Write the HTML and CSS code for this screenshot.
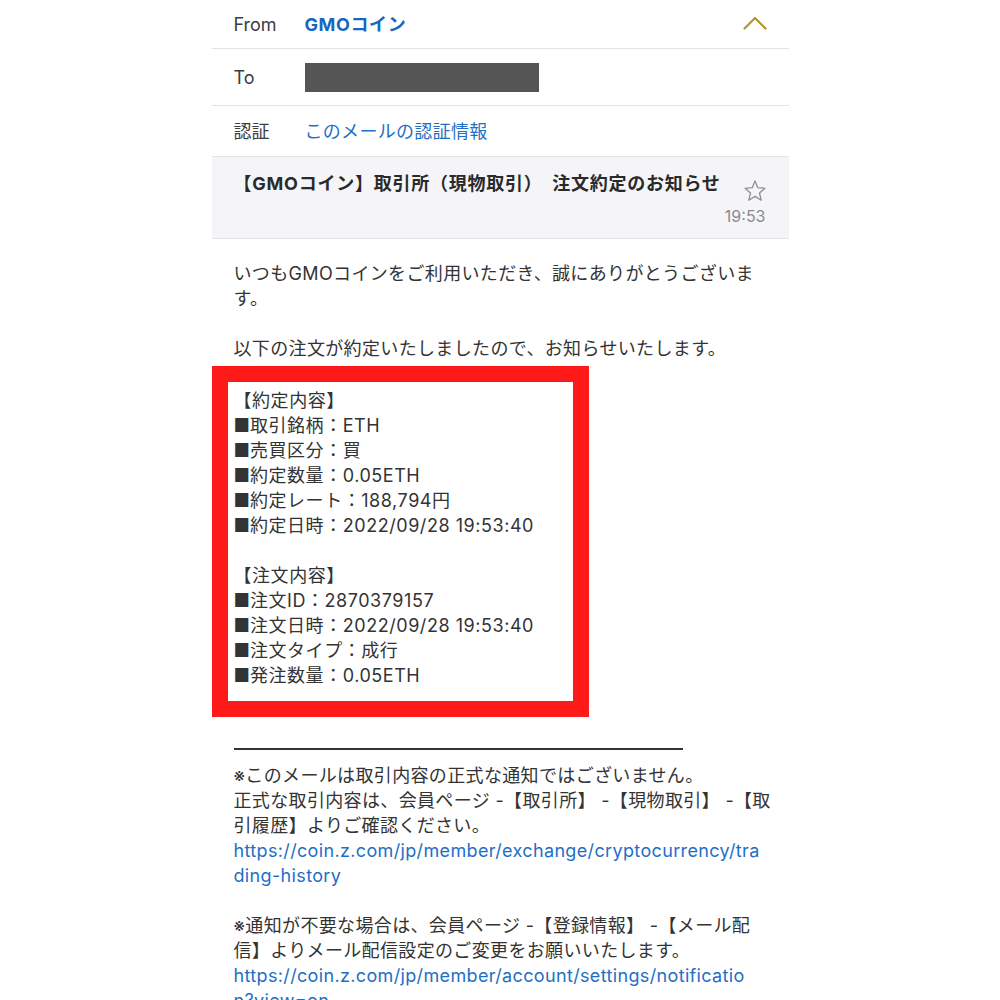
FILE: index.html
```html
<!DOCTYPE html>
<html lang="ja">
<head>
<meta charset="utf-8">
<title>GMOコイン 注文約定のお知らせ</title>
<link rel="stylesheet" href="styles.css">
</head>
<body>
<div class="mail">
  <div class="hrow row-from">
    <span class="label">From</span>
    <span class="sender">GMOコイン</span>
    <svg class="chev" width="24" height="14" viewBox="0 0 24 14"><polyline points="1.5,12.5 12,2 22.5,12.5" fill="none" stroke="#b0952a" stroke-width="2.2" stroke-linecap="round" stroke-linejoin="round"/></svg>
  </div>
  <div class="hrow row-to">
    <span class="label">To</span>
    <span class="redact"></span>
  </div>
  <div class="hrow row-auth">
    <span class="label">認証</span>
    <span class="link">このメールの認証情報</span>
  </div>
  <div class="subject">
    <div class="title">【GMOコイン】取引所（現物取引）　注文約定のお知らせ</div>
    <div class="meta">
      <svg class="star" width="24" height="24" viewBox="0 0 24 24"><polygon points="12,2 14.8,8.7 22,9.3 16.5,14 18.2,21.2 12,17.4 5.8,21.2 7.5,14 2,9.3 9.2,8.7" fill="none" stroke="#8e8e93" stroke-width="1.3" stroke-linejoin="round"/></svg>
      <span class="time">19:53</span>
    </div>
  </div>
  <div class="content">
    <p class="para gap">いつもGMOコインをご利用いただき、誠にありがとうございま<br>す。</p>
    <p class="para">以下の注文が約定いたしましたので、お知らせいたします。</p>
    <div class="highlight">
      <div class="group gap">
        <div class="line">【約定内容】</div>
        <div class="line"><span class="sq">■</span>取引銘柄：ETH</div>
        <div class="line"><span class="sq">■</span>売買区分：買</div>
        <div class="line"><span class="sq">■</span>約定数量：0.05ETH</div>
        <div class="line"><span class="sq">■</span>約定レート：188,794円</div>
        <div class="line"><span class="sq">■</span>約定日時：2022/09/28 19:53:40</div>
      </div>
      <div class="group">
        <div class="line">【注文内容】</div>
        <div class="line"><span class="sq">■</span>注文ID：2870379157</div>
        <div class="line"><span class="sq">■</span>注文日時：2022/09/28 19:53:40</div>
        <div class="line"><span class="sq">■</span>注文タイプ：成行</div>
        <div class="line"><span class="sq">■</span>発注数量：0.05ETH</div>
      </div>
    </div>
    <div class="rule"></div>
    <p class="para gap footer-first">※このメールは取引内容の正式な通知ではございません。<br>正式な取引内容は、会員ページ -【取引所】 -【現物取引】 -【取<br>引履歴】よりご確認ください。<br><span class="url">https://coin.z.com/jp/member/exchange/cryptocurrency/tra<br>ding-history</span></p>
    <p class="para">※通知が不要な場合は、会員ページ -【登録情報】 -【メール配<br>信】よりメール配信設定のご変更をお願いいたします。<br><span class="url">https://coin.z.com/jp/member/account/settings/notificatio<br>n?view=on</span></p>
  </div>
</div>
</body>
</html>
```

FILE: styles.css
```css
* {
  box-sizing: border-box;
}

html, body {
  margin: 0;
  padding: 0;
  background: #ffffff;
}

body {
  font-family: Inter, "Noto Sans CJK JP", sans-serif;
  font-size: 18px;
  color: #333333;
}

.mail {
  width: 577px;
  margin: 0 auto;
}

.hrow {
  display: flex;
  align-items: center;
  padding: 0 22px;
  border-bottom: 1px solid #e4e4e6;
}

.row-from {
  height: 49px;
}

.row-to {
  height: 57px;
}

.row-auth {
  height: 51px;
}

.label {
  width: 71px;
  flex: none;
  color: #3c3c3e;
  line-height: 25px;
}

.sender {
  color: #1766c2;
  font-weight: 700;
  line-height: 25px;
  letter-spacing: 0.6px;
}

.chev {
  margin-left: auto;
  margin-top: -2px;
}

.redact {
  display: block;
  width: 234px;
  height: 29px;
  background: #555555;
}

.link {
  color: #1f6fc6;
  line-height: 25px;
  letter-spacing: 0.3px;
}

.subject {
  display: flex;
  height: 82px;
  padding: 14px 23px 0 22px;
  background: #f5f5f7;
  border-bottom: 1px solid #e4e4e6;
}

.title {
  flex: 1;
  font-weight: 700;
  line-height: 25px;
  color: #2a2a2c;
  white-space: nowrap;
  letter-spacing: 0.75px;
}

.meta {
  display: flex;
  flex-direction: column;
  align-items: flex-end;
}

.star {
  display: block;
  margin-top: 8px;
  margin-right: -1px;
}

.time {
  margin-top: 3px;
  font-size: 16px;
  line-height: 20px;
  color: #8a8a8e;
}

.content {
  padding-top: 22px;
  letter-spacing: 0.35px;
}

.para {
  margin: 0;
  padding: 0 22px;
  line-height: 25px;
  white-space: nowrap;
}

.para.gap {
  margin-bottom: 25px;
}

.highlight {
  width: 377px;
  margin-top: 5px;
  border: 16px solid #ff1a1a;
  padding: 6px 6px 13px;
  background: #ffffff;
}

.group.gap {
  margin-bottom: 25px;
}

.line {
  height: 25px;
  line-height: 25px;
  white-space: nowrap;
  letter-spacing: 0.55px;
}

.sq {
  line-height: 1;
  color: #333333;
  letter-spacing: 0;
}

.rule {
  width: 449px;
  height: 2px;
  margin: 31px 0 0 22px;
  background: #333333;
}

.footer-first {
  margin-top: 13px;
}

.url {
  color: #1f6fc6;
}
```
